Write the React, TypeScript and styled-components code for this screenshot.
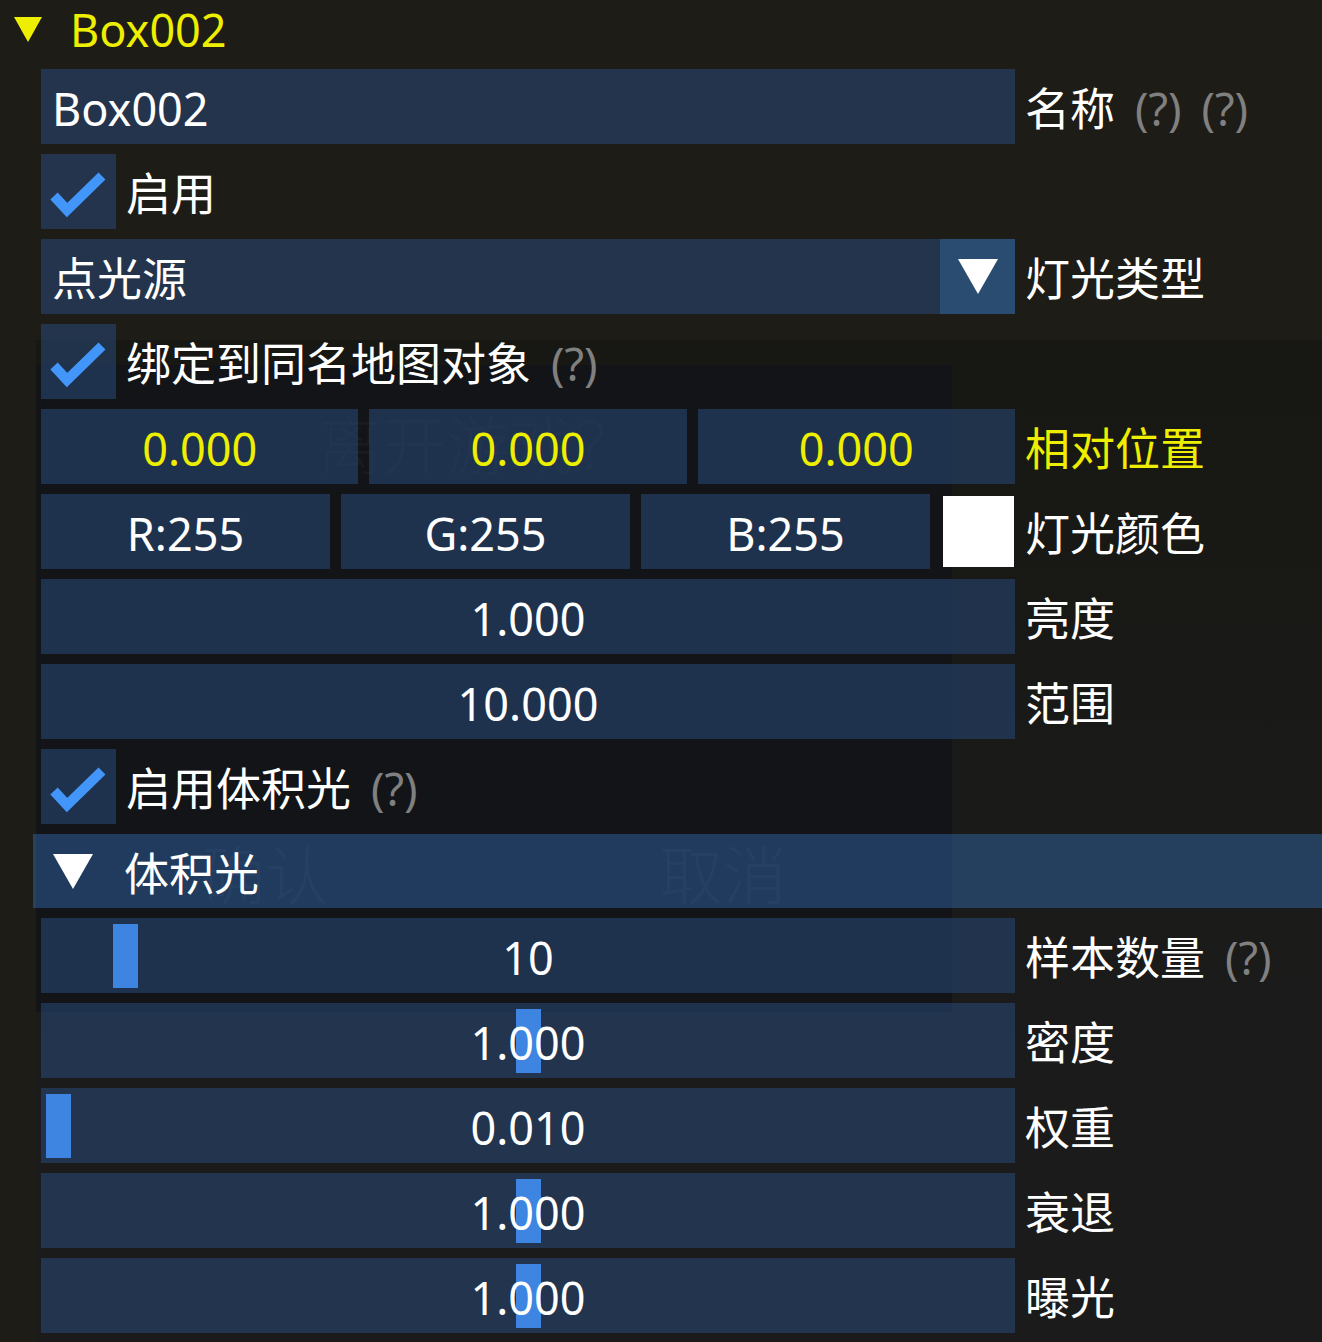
import React from 'react';
import styled, { createGlobalStyle } from 'styled-components';

const GlobalStyle = createGlobalStyle`
  html, body {
    margin: 0;
    padding: 0;
    background: #1d1c17;
    overflow: hidden;
  }
  body {
    font-family: "Noto Sans", "Noto Sans CJK SC", sans-serif;
    -webkit-font-smoothing: antialiased;
  }
`;

const colors = {
  frame: 'rgba(41, 74, 122, 0.54)',
  header: 'rgba(66, 150, 250, 0.31)',
  button: 'rgba(66, 150, 250, 0.40)',
  check: '#4296fa',
  grab: '#3d85e0',
  text: '#ffffff',
  disabled: '#808080',
  yellow: '#eeee00',
};

const Screen = styled.div`
  position: relative;
  width: 1322px;
  height: 1342px;
  overflow: hidden;
  font-size: 45px;
  line-height: 1;
  color: ${colors.text};
  background:
    linear-gradient(180deg, #171813 0px, #1b1b1b 700px) 36px 340px / 1286px 1002px no-repeat,
    #1d1c17;
`;

/* the game's dialog seen through the tool window */
const GhostDialog = styled.div`
  position: absolute;
  left: 36px;
  top: 365px;
  width: 916px;
  height: 647px;
  background: #121418;
  z-index: 0;
  display: flex;
  flex-direction: column;
  color: rgba(255, 255, 255, 0.03);
  font-family: "Noto Sans CJK SC", sans-serif;
  font-weight: 300;
`;

const GhostTitle = styled.div`
  font-size: 64px;
  padding: 44px 0 0 282px;
`;

const GhostButtons = styled.div`
  display: grid;
  grid-template-columns: 1fr 1fr;
  margin-top: 366px;
  font-size: 64px;
  text-align: center;
`;

const Panel = styled.div`
  position: relative;
  z-index: 1;
  display: flex;
  flex-direction: column;
  gap: 10px;
`;

const TreeNode = styled.div`
  height: 59px;
  display: flex;
  align-items: center;
  gap: 28px;
  padding-left: 14px;
  color: ${colors.yellow};
`;

const Arrow = styled.span<{ $w: number; $h: number; $color: string }>`
  width: 0;
  height: 0;
  flex: none;
  border-left: ${({ $w }) => $w / 2}px solid transparent;
  border-right: ${({ $w }) => $w / 2}px solid transparent;
  border-top: ${({ $h }) => $h}px solid ${({ $color }) => $color};
`;

const Row = styled.div`
  display: flex;
  align-items: center;
  height: 75px;
  gap: 10px;
  padding-left: 41px;
`;

const Widgets = styled.div`
  width: 974px;
  height: 75px;
  flex: none;
  display: flex;
  gap: 11px;
`;

const Frame = styled.div<{ $align?: 'left' | 'center'; $color?: string }>`
  position: relative;
  flex: 1;
  height: 75px;
  display: flex;
  align-items: center;
  justify-content: ${({ $align }) => ($align === 'left' ? 'flex-start' : 'center')};
  padding: 4px 11px 0;
  box-sizing: border-box;
  background: ${colors.frame};
  color: ${({ $color }) => $color || colors.text};
  white-space: nowrap;
`;

const FrameText = styled.span`
  position: relative;
  z-index: 1;
`;

const Grab = styled.div`
  position: absolute;
  top: 6px;
  bottom: 5px;
  width: 25px;
  background: ${colors.grab};
`;

const ComboButton = styled.div`
  width: 75px;
  height: 75px;
  flex: none;
  margin-left: -11px;
  display: flex;
  align-items: center;
  justify-content: center;
  background: ${colors.button};
`;

const Swatch = styled.div`
  width: 74px;
  height: 75px;
  flex: none;
  display: flex;
  align-items: center;
  justify-content: center;
`;

const SwatchFill = styled.div`
  width: 71px;
  height: 71px;
  background: #ffffff;
`;

const Label = styled.span<{ $color?: string }>`
  padding-top: 4px;
  white-space: nowrap;
  color: ${({ $color }) => $color || colors.text};
`;

const Help = styled.span`
  margin-left: 20px;
  color: ${colors.disabled};
`;

const CheckBox = styled.div`
  width: 75px;
  height: 75px;
  flex: none;
  background: ${colors.frame};
  display: flex;
`;

const SectionHeader = styled.div`
  height: 74px;
  margin-left: 33px;
  display: flex;
  align-items: center;
  gap: 31px;
  padding-left: 20px;
  background: ${colors.header};
`;

const HelpMarks: React.FC<{ count?: number }> = ({ count = 1 }) => (
  <>
    {Array.from({ length: count }).map((_, i) => (
      <Help key={i}>(?)</Help>
    ))}
  </>
);

const Check: React.FC<{ label: string; help?: boolean }> = ({ label, help }) => (
  <Row>
    <CheckBox>
      <svg width="75" height="75" viewBox="0 0 75 75">
        <polyline points="13,42 26,56 61,22" fill="none" stroke={colors.check} strokeWidth="10" />
      </svg>
    </CheckBox>
    <Label>
      {label}
      {help && <HelpMarks />}
    </Label>
  </Row>
);

const Slider: React.FC<{ value: string; t: number; label: string; help?: boolean }> = ({
  value,
  t,
  label,
  help,
}) => (
  <Row>
    <Widgets>
      <Frame>
        <Grab style={{ left: 5 + t * 939 }} />
        <FrameText>{value}</FrameText>
      </Frame>
    </Widgets>
    <Label>
      {label}
      {help && <HelpMarks />}
    </Label>
  </Row>
);

export default function App() {
  return (
    <>
      <GlobalStyle />
      <Screen>
        <GhostDialog>
          <GhostTitle>离开游戏？</GhostTitle>
          <GhostButtons>
            <span>确认</span>
            <span>取消</span>
          </GhostButtons>
        </GhostDialog>

        <Panel>
          <TreeNode>
            <Arrow $w={28} $h={25} $color={colors.yellow} />
            <span>Box002</span>
          </TreeNode>

          <Row>
            <Widgets>
              <Frame $align="left">Box002</Frame>
            </Widgets>
            <Label>
              名称
              <HelpMarks count={2} />
            </Label>
          </Row>

          <Check label="启用" />

          <Row>
            <Widgets>
              <Frame $align="left">点光源</Frame>
              <ComboButton>
                <Arrow $w={40} $h={35} $color="#ffffff" />
              </ComboButton>
            </Widgets>
            <Label>灯光类型</Label>
          </Row>

          <Check label="绑定到同名地图对象" help />

          <Row>
            <Widgets>
              <Frame $color={colors.yellow}>0.000</Frame>
              <Frame $color={colors.yellow}>0.000</Frame>
              <Frame $color={colors.yellow}>0.000</Frame>
            </Widgets>
            <Label $color={colors.yellow}>相对位置</Label>
          </Row>

          <Row>
            <Widgets>
              <Frame>R:255</Frame>
              <Frame>G:255</Frame>
              <Frame>B:255</Frame>
              <Swatch>
                <SwatchFill />
              </Swatch>
            </Widgets>
            <Label>灯光颜色</Label>
          </Row>

          <Row>
            <Widgets>
              <Frame>1.000</Frame>
            </Widgets>
            <Label>亮度</Label>
          </Row>

          <Row>
            <Widgets>
              <Frame>10.000</Frame>
            </Widgets>
            <Label>范围</Label>
          </Row>

          <Check label="启用体积光" help />

          <SectionHeader>
            <Arrow $w={40} $h={35} $color="#ffffff" />
            <Label>体积光</Label>
          </SectionHeader>

          <Slider value="10" t={0.0713} label="样本数量" help />
          <Slider value="1.000" t={0.5} label="密度" />
          <Slider value="0.010" t={0} label="权重" />
          <Slider value="1.000" t={0.5} label="衰退" />
          <Slider value="1.000" t={0.5} label="曝光" />
        </Panel>
      </Screen>
    </>
  );
}
